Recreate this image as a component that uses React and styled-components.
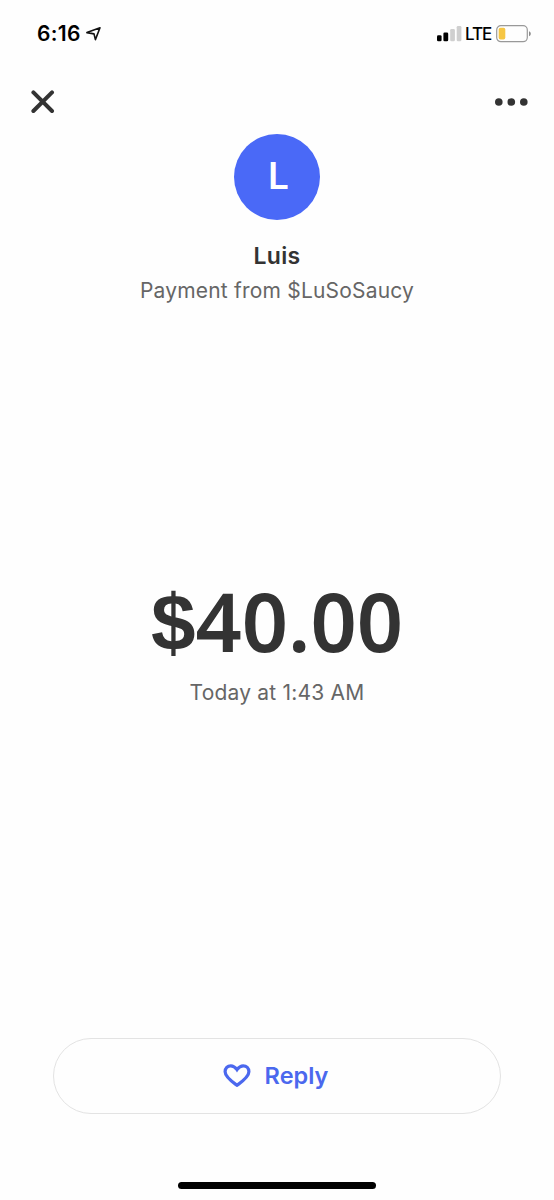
import React from 'react';
import styled, { createGlobalStyle } from 'styled-components';

const GlobalStyle = createGlobalStyle`
  * {
    box-sizing: border-box;
  }
  body {
    margin: 0;
    background: #fefefe;
    font-family: Inter, sans-serif;
  }
`;

const App = () => {
  return (
    <Screen>
      <GlobalStyle />

      <StatusBar>
        <Clock>6:16</Clock>
        <svg width="16" height="16" viewBox="0 0 16 16" fill="none">
          <path d="M0.9 6.6 14 1.8 9.4 13.6 8 7.9Z" stroke="#111" strokeWidth="1.6" strokeLinejoin="round" />
        </svg>
        <StatusRight>
          <svg width="25" height="16" viewBox="0 0 25 16">
            <rect x="0" y="9.2" width="4.6" height="6" rx="1.3" fill="#000" />
            <rect x="6.4" y="6.4" width="4.8" height="8.8" rx="1.3" fill="#000" />
            <rect x="13.2" y="3" width="4.7" height="12.2" rx="1.3" fill="#cfcfcf" />
            <rect x="19.7" y="0" width="4.7" height="15.2" rx="1.3" fill="#cfcfcf" />
          </svg>
          <Carrier>LTE</Carrier>
          <svg width="36" height="18" viewBox="0 0 36 18">
            <rect x="0.7" y="0.7" width="30.6" height="16" rx="4.2" fill="none" stroke="#999" strokeWidth="1.2" />
            <rect x="2.7" y="2.8" width="6.6" height="11.8" rx="1.8" fill="#f6c644" />
            <path d="M33 6.2c2.4.8 2.4 4.2 0 5Z" fill="#8c8c8c" />
          </svg>
        </StatusRight>
      </StatusBar>

      <NavBar>
        <IconButton aria-label="Close">
          <svg width="24" height="24" viewBox="0 0 24 24">
            <path d="M2.4 2.4 21 21M21 2.4 2.4 21" stroke="#333" strokeWidth="4" strokeLinecap="round" />
          </svg>
        </IconButton>
        <IconButton aria-label="More">
          <svg width="34" height="8" viewBox="0 0 34 8" fill="#333">
            <circle cx="3.8" cy="4" r="3.8" />
            <circle cx="16.3" cy="4" r="3.8" />
            <circle cx="28.8" cy="4" r="3.8" />
          </svg>
        </IconButton>
      </NavBar>

      <Profile>
        <Avatar>L</Avatar>
        <Name>Luis</Name>
        <Detail>Payment from $LuSoSaucy</Detail>
      </Profile>

      <Payment>
        <Amount>
          <Currency>$</Currency>40.00
        </Amount>
        <Detail>Today at 1:43 AM</Detail>
      </Payment>

      <ReplyButton>
        <svg width="28" height="24" viewBox="0 0 28 24" fill="none">
          <path
            d="M14 22.3C9.5 18.9 2.1 13.9 2.1 8.7C2.1 5.3 4.6 2.8 7.8 2.8C10.6 2.8 12.3 4.3 14 6.7C15.7 4.3 17.4 2.8 20.2 2.8C23.4 2.8 25.9 5.3 25.9 8.7C25.9 13.9 18.5 18.9 14 22.3Z"
            stroke="#4b68ee"
            strokeWidth="3.2"
          />
        </svg>
        <ReplyText>Reply</ReplyText>
      </ReplyButton>

      <HomeBar />
    </Screen>
  );
};

const Screen = styled.div`
  width: 554px;
  height: 1200px;
  display: flex;
  flex-direction: column;
  align-items: center;
  overflow: hidden;
  white-space: nowrap;
`;

const StatusBar = styled.div`
  width: 100%;
  height: 67px;
  padding: 0 22px 0 37px;
  display: flex;
  align-items: center;
  gap: 5px;
`;

const Clock = styled.span`
  width: 44px;
  font-size: 21px;
  font-weight: 600;
  line-height: 24px;
  letter-spacing: 0.3px;
  color: #000;
`;

const StatusRight = styled.div`
  display: flex;
  align-items: center;
  margin-left: auto;
`;

const Carrier = styled.span`
  width: 34px;
  padding-left: 3px;
  font-size: 17px;
  font-weight: 500;
  letter-spacing: -1px;
  color: #000;
`;

const NavBar = styled.div`
  width: 100%;
  height: 67px;
  padding: 3px 25px 0 31px;
  display: flex;
  align-items: center;
  justify-content: space-between;
`;

const IconButton = styled.button`
  display: flex;
  padding: 0;
  border: none;
  background: none;
`;

const Profile = styled.div`
  display: flex;
  flex-direction: column;
  align-items: center;
`;

const Avatar = styled.div`
  width: 86px;
  height: 86px;
  border-radius: 50%;
  display: flex;
  align-items: center;
  justify-content: center;
  padding: 0 0 3px 3px;
  background: #4a69f7;
  color: #fff;
  font-size: 37px;
  font-weight: 600;
`;

const Name = styled.div`
  margin-top: 20px;
  font-size: 23px;
  font-weight: 600;
  line-height: 32px;
  letter-spacing: 0.3px;
  color: #333;
`;

const Detail = styled.div`
  font-size: 21px;
  line-height: 38px;
  letter-spacing: 0.2px;
  color: #666;
`;

const Payment = styled.div`
  margin-top: 264px;
  display: flex;
  flex-direction: column;
  align-items: center;
`;

const Amount = styled.div`
  height: 100px;
  font-family: 'Noto Sans', sans-serif;
  font-size: 81px;
  font-weight: 600;
  line-height: 94px;
  color: #333;
`;

const Currency = styled.span`
  font-family: 'Liberation Sans', sans-serif;
  font-size: 80px;
  font-weight: 700;
  line-height: 1;
  vertical-align: 2px;
`;

const ReplyButton = styled.button`
  width: 448px;
  height: 76px;
  margin: auto 1px 0 0;
  padding: 0 2px 2px 0;
  border: 1px solid #e3e3e3;
  border-radius: 38px;
  display: flex;
  align-items: center;
  justify-content: center;
  gap: 14px;
  background: #fefefe;
  font-family: inherit;
`;

const ReplyText = styled.span`
  font-size: 23.5px;
  font-weight: 600;
  color: #4b68ee;
`;

const HomeBar = styled.div`
  width: 198px;
  height: 7px;
  margin: 68px 0 11px;
  border-radius: 4px;
  background: #000;
`;

export default App;
